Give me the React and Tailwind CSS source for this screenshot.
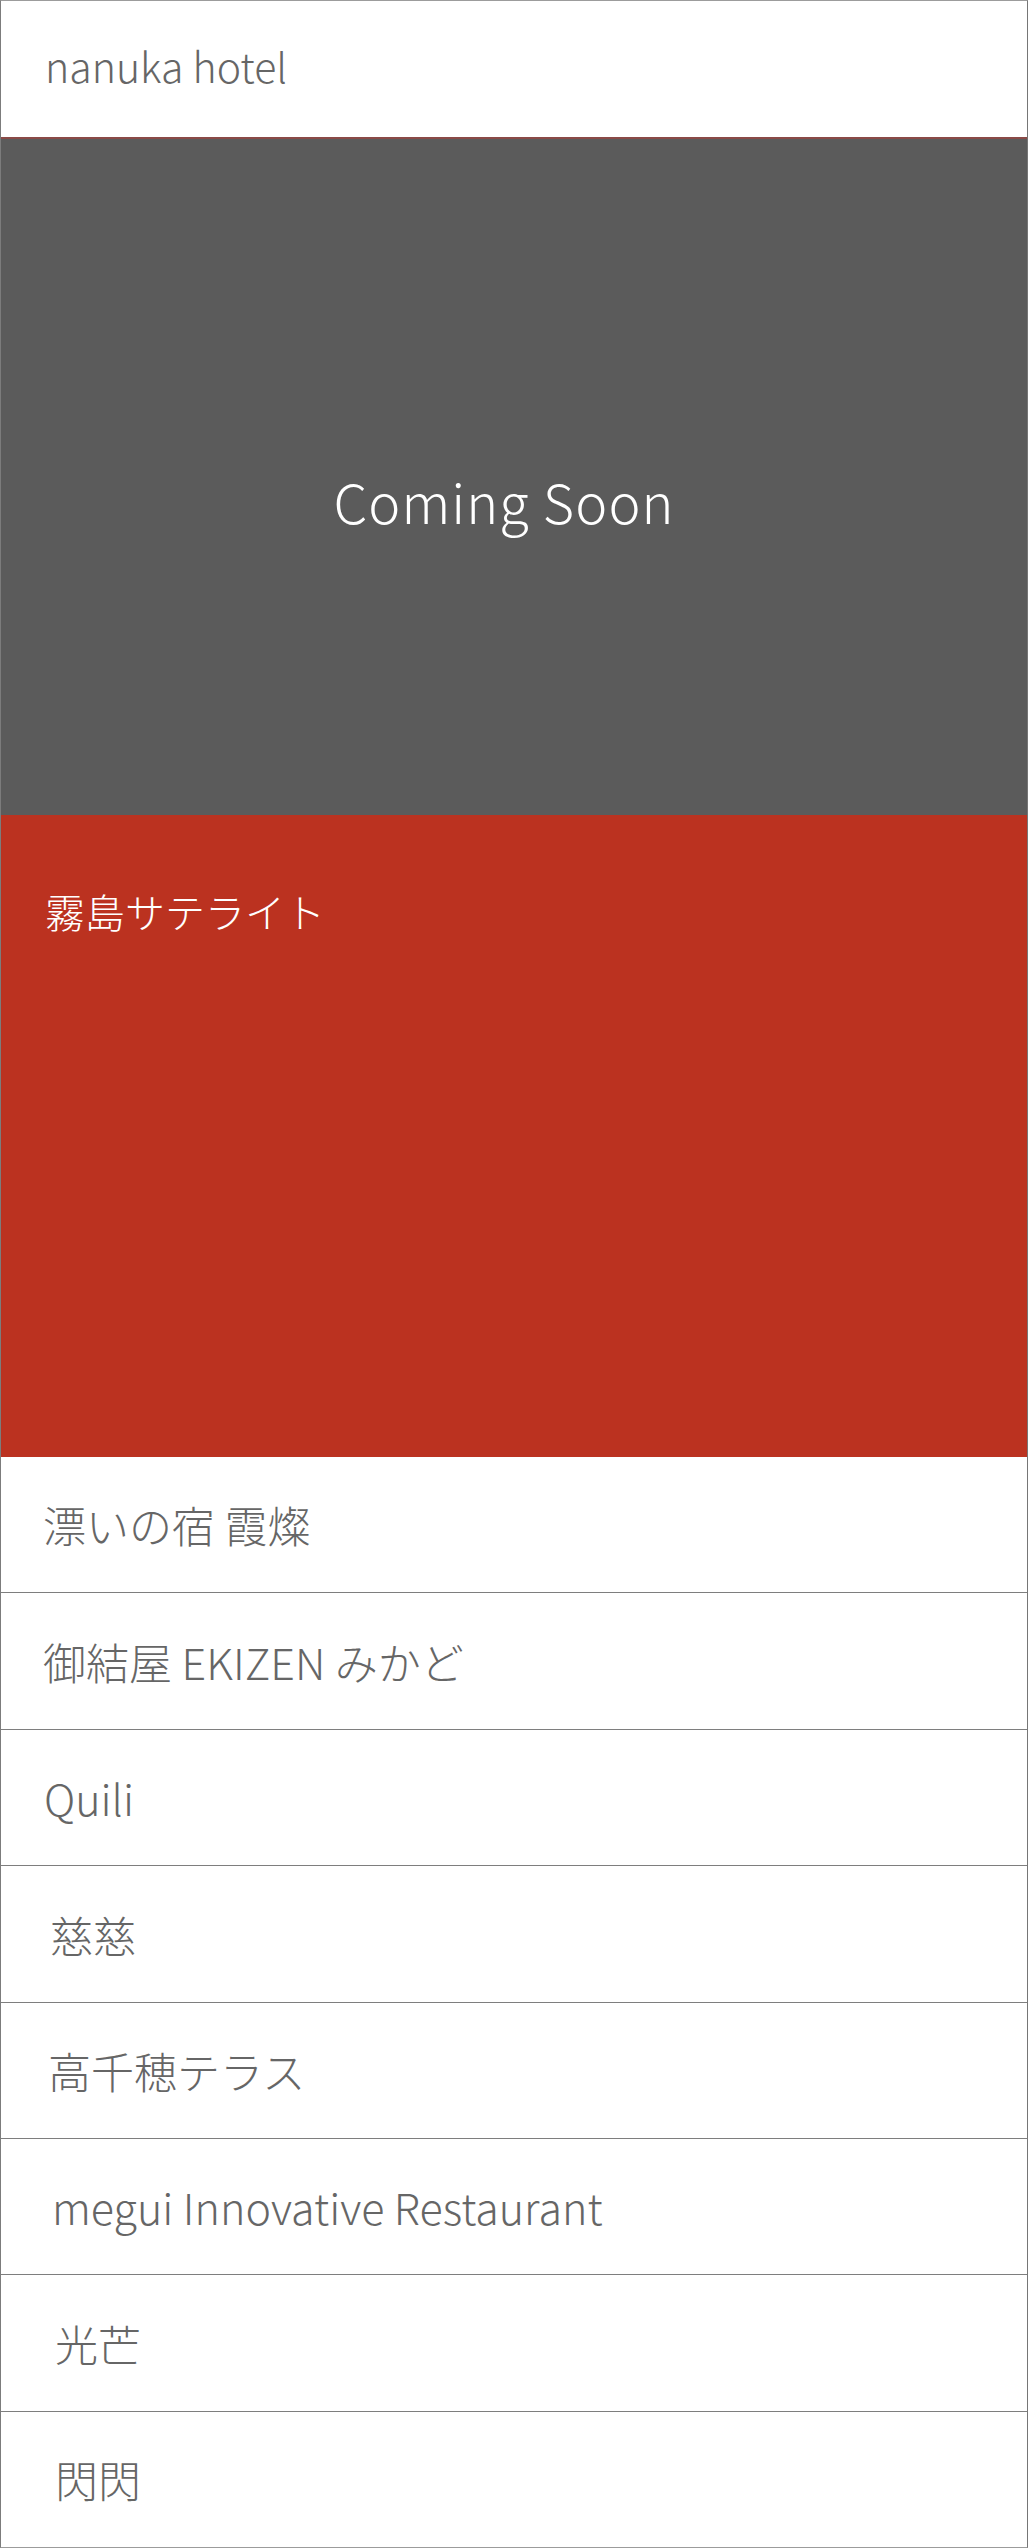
const items = [
  { label: '漂いの宿 霞燦', pad: 'pl-[42px]' },
  { label: '御結屋 EKIZEN みかど', pad: 'pl-[42px]' },
  { label: 'Quili', pad: 'pl-[43px]' },
  { label: '慈慈', pad: 'pl-[49px]' },
  { label: '高千穂テラス', pad: 'pl-[47px]' },
  { label: 'megui Innovative Restaurant', pad: 'pl-[51px]' },
  { label: '光芒', pad: 'pl-[54px]' },
  { label: '閃閃', pad: 'pl-[54px]' },
];

export default function App() {
  return (
    <div className="w-[1028px] h-[2548px] bg-white font-['Noto_Sans_CJK_JP','Noto_Sans',sans-serif] font-light">
      <div className="h-full border border-[#9c9c9c] border-l-[#7c7c7c] border-r-[#767676] flex flex-col">
        {/* Header */}
        <div className="h-[136px] flex items-center pl-[44px] pb-[6px] text-[41px] text-[#666]">
          nanuka hotel
        </div>

        {/* Coming soon */}
        <div className="h-[678px] bg-[#5b5b5b] border-t-2 border-[#8a4a47] flex items-center justify-center pr-[20px] pt-[46px]">
          <span className="text-white text-[54px] tracking-[0.02em]">Coming Soon</span>
        </div>

        {/* Feature */}
        <div className="h-[642px] bg-[#bb3220] pl-[44px] pt-[70px]">
          <span className="text-white text-[40px] leading-[52px]">霧島サテライト</span>
        </div>

        {/* List */}
        {items.map((item, i) => (
          <div
            key={item.label}
            className={`flex-1 flex items-center ${item.pad} text-[43px] text-[#666] ${i < items.length - 1 ? 'border-b border-[#7e7e7e]' : ''}`}
          >
            {item.label}
          </div>
        ))}
      </div>
    </div>
  );
}
